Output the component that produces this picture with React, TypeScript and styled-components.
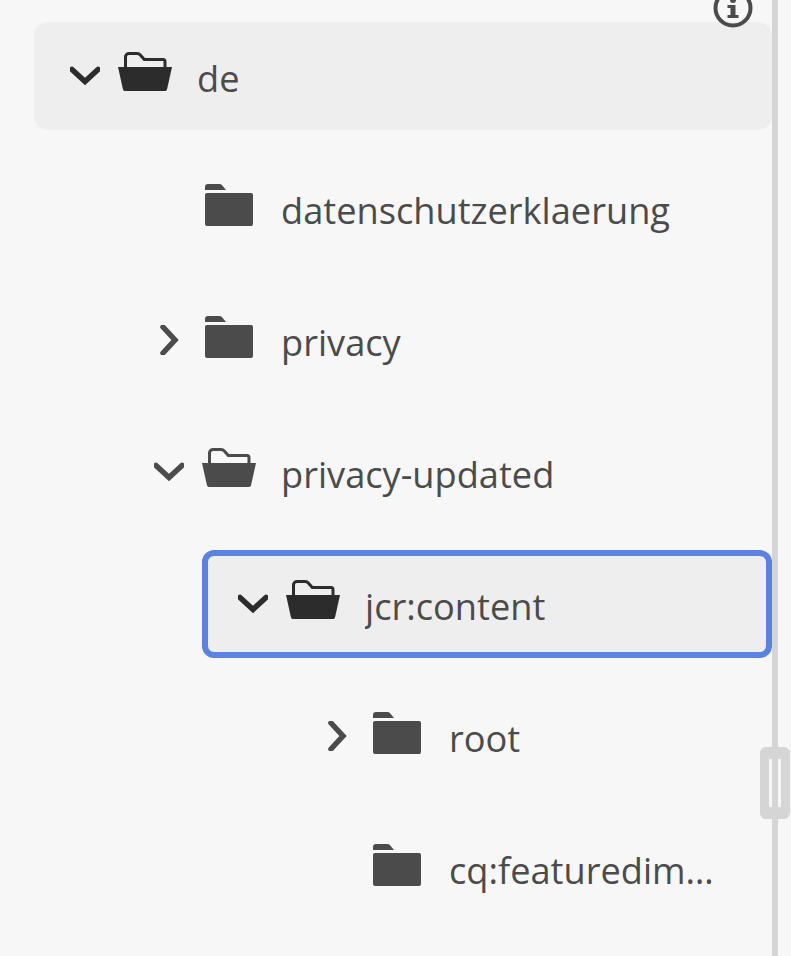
import React from 'react';
import styled, { createGlobalStyle } from 'styled-components';

type Node = {
  id: string;
  label: string;
  level: number;
  state: 'open' | 'closed' | 'leaf';
  active?: boolean;
  focused?: boolean;
};

const NODES: Node[] = [
  { id: 'de', label: 'de', level: 0, state: 'open', active: true },
  { id: 'dsk', label: 'datenschutzerklaerung', level: 1, state: 'leaf' },
  { id: 'privacy', label: 'privacy', level: 1, state: 'closed' },
  { id: 'updated', label: 'privacy-updated', level: 1, state: 'open' },
  { id: 'jcr', label: 'jcr:content', level: 2, state: 'open', active: true, focused: true },
  { id: 'root', label: 'root', level: 3, state: 'closed' },
  { id: 'cq', label: 'cq:featuredimage', level: 3, state: 'leaf' },
];

const GlobalStyle = createGlobalStyle`
  html, body {
    margin: 0;
    padding: 0;
    height: 956px;
    overflow: hidden;
    background: #f7f7f7;
  }
`;

const Page = styled.div`
  position: relative;
  display: flex;
  width: 791px;
  height: 956px;
  overflow: hidden;
  font-family: "Open Sans", sans-serif;
`;

const Tree = styled.ul`
  list-style: none;
  margin: 0;
  padding: 22px 0 0 34px;
  width: 772px;
  box-sizing: border-box;
  display: flex;
  flex-direction: column;
  gap: 24px;
`;

const Row = styled.li<{ $level: number; $active?: boolean; $focused?: boolean }>`
  flex: none;
  height: 108px;
  box-sizing: border-box;
  margin-left: ${(p) => (p.$level === 2 ? 168 : 0)}px;
  padding-left: ${(p) => (p.$level === 2 ? 0 : p.$level * 84)}px;
  padding-right: 55px;
  display: flex;
  align-items: center;
  border-radius: ${(p) => (p.$focused ? 12 : 14)}px;
  background: ${(p) => (p.$active ? '#eeeeee' : 'transparent')};
  border: ${(p) => (p.$focused ? '6px solid #5a82e0' : 'none')};
`;

const Toggle = styled.span<{ $inset: boolean }>`
  flex: none;
  width: ${(p) => (p.$inset ? 78 : 84)}px;
  height: 42px;
  display: flex;
  align-items: center;
  justify-content: flex-end;
  padding-right: 18px;
  box-sizing: border-box;
`;

const FolderSlot = styled.span<{ $open: boolean }>`
  flex: none;
  width: 54px;
  margin-bottom: ${(p) => (p.$open ? 9 : 6)}px;
  display: flex;
  justify-content: center;
`;

const Label = styled.span`
  margin-left: 25px;
  padding-top: 4px;
  min-width: 0;
  white-space: nowrap;
  overflow: hidden;
  text-overflow: ellipsis;
  font-size: 36.2px;
  line-height: 52px;
  color: #4b4b4b;
`;

const Divider = styled.div`
  flex: none;
  width: 6px;
  height: 956px;
  background: #d5d5d5;
`;

const DragHandle = styled.div`
  position: absolute;
  left: 760px;
  top: 747px;
  width: 30px;
  height: 72px;
  border-radius: 6px;
  background: #d5d5d5;
  display: flex;
  justify-content: center;
  align-items: center;
  gap: 6px;
`;

const Grip = styled.span`
  width: 3px;
  height: 48px;
  background: #f7f7f7;
`;

const InfoButton = styled.span`
  position: absolute;
  left: 713px;
  top: -12px;
  width: 40px;
  height: 40px;
  display: block;
`;

const Chevron = ({ open, color }: { open: boolean; color: string }) => (
  <svg width="30" height="30" viewBox="0 0 30 30" fill="none">
    <path
      d={open ? 'M2 8.5 15 20.5 28 8.5' : 'M9 2 21 15 9 28'}
      stroke={color}
      strokeWidth="5.5"
      strokeLinecap="round"
      strokeLinejoin="miter"
    />
  </svg>
);

const FolderClosed = ({ color }: { color: string }) => (
  <svg width="48" height="42" viewBox="0 0 48 42">
    <path d="M0 6V3a3 3 0 0 1 3-3h11c1.500 0 2.500.5 3.300 1.500L21 6Z" fill={color} />
    <path d="M0 11a2 2 0 0 1 2-2h44a2 2 0 0 1 2 2v29a2 2 0 0 1-2 2H2a2 2 0 0 1-2-2Z" fill={color} />
  </svg>
);

const FolderOpen = ({ color }: { color: string }) => (
  <svg width="54" height="39" viewBox="0 0 54 39">
    <path
      d="M7.500 16V5a3.500 3.500 0 0 1 3.500-3.500h8c1.500 0 2.500.5 3.300 1.500l4 4.500H45a2 2 0 0 1 2 2V16"
      fill="none"
      stroke={color}
      strokeWidth="3"
    />
    <path d="M0 15h54l-5 22.500a2 2 0 0 1-2 1.500H7a2 2 0 0 1-2-1.500Z" fill={color} />
  </svg>
);

const InfoIcon = () => (
  <svg width="40" height="40" viewBox="0 0 40 40">
    <circle cx="20" cy="20" r="17.500" fill="none" stroke="#4b4b4b" strokeWidth="4" />
    <circle cx="20" cy="12" r="3" fill="#4b4b4b" />
    <path d="M14.500 17h8v10h3v3h-11v-3h3v-7h-3Z" fill="#4b4b4b" />
  </svg>
);

const App: React.FC = () => (
  <Page>
    <GlobalStyle />
    <Tree>
      {NODES.map((node) => {
        const iconColor = node.active ? '#2c2c2c' : '#4b4b4b';
        const isOpen = node.state === 'open';
        return (
          <Row key={node.id} $level={node.level} $active={node.active} $focused={node.focused}>
            <Toggle $inset={!!node.focused}>
              {node.state !== 'leaf' && <Chevron open={isOpen} color={iconColor} />}
            </Toggle>
            <FolderSlot $open={isOpen}>
              {isOpen ? <FolderOpen color={iconColor} /> : <FolderClosed color={iconColor} />}
            </FolderSlot>
            <Label>{node.label}</Label>
          </Row>
        );
      })}
    </Tree>
    <Divider />
    <DragHandle>
      <Grip />
      <Grip />
    </DragHandle>
    <InfoButton>
      <InfoIcon />
    </InfoButton>
  </Page>
);

export default App;
